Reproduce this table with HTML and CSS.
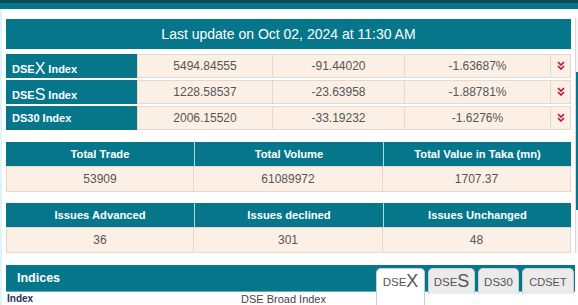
FILE: index.html
```html
<!DOCTYPE html>
<html>
<head>
<meta charset="utf-8">
<link rel="stylesheet" href="styles.css">
</head>
<body>
<div class="topbar"></div>
<div class="page">
  <div class="scrollarea">
    <div class="content">
      <div class="update">Last update on Oct 02, 2024 at 11:30 AM</div>
      <div class="idx">
        <div class="idx-row">
          <div class="idx-label big">DSE<span class="big-letter">X</span>&nbsp;Index</div>
          <div class="cell first">5494.84555</div>
          <div class="cell">-91.44020</div>
          <div class="cell">-1.63687%</div>
          <div class="cell arrow"><svg width="8" height="9" viewBox="0 0 8 9"><path d="M1 1 L4 4 L7 1 M1 5 L4 8 L7 5" fill="none" stroke="#c8102e" stroke-width="1.6"/></svg></div>
        </div>
        <div class="idx-row">
          <div class="idx-label big">DSE<span class="big-letter">S</span>&nbsp;Index</div>
          <div class="cell first">1228.58537</div>
          <div class="cell">-23.63958</div>
          <div class="cell">-1.88781%</div>
          <div class="cell arrow"><svg width="8" height="9" viewBox="0 0 8 9"><path d="M1 1 L4 4 L7 1 M1 5 L4 8 L7 5" fill="none" stroke="#c8102e" stroke-width="1.6"/></svg></div>
        </div>
        <div class="idx-row">
          <div class="idx-label">DS30 Index</div>
          <div class="cell first">2006.15520</div>
          <div class="cell">-33.19232</div>
          <div class="cell">-1.6276%</div>
          <div class="cell arrow"><svg width="8" height="9" viewBox="0 0 8 9"><path d="M1 1 L4 4 L7 1 M1 5 L4 8 L7 5" fill="none" stroke="#c8102e" stroke-width="1.6"/></svg></div>
        </div>
      </div>
      <div class="sum">
        <div class="sh">Total Trade</div>
        <div class="sh sep">Total Volume</div>
        <div class="sh sep">Total Value in Taka (mn)</div>
        <div class="sd">53909</div>
        <div class="sd nl">61089972</div>
        <div class="sd nl">1707.37</div>
      </div>
      <div class="sum sum2">
        <div class="sh">Issues Advanced</div>
        <div class="sh sep">Issues declined</div>
        <div class="sh sep">Issues Unchanged</div>
        <div class="sd">36</div>
        <div class="sd nl">301</div>
        <div class="sd nl">48</div>
      </div>
    </div>
    <div class="scrollbar"><div class="thumb"></div></div>
  </div>
  <div class="indices">
    <div class="ind-head">
      <span class="ind-title">Indices</span>
      <div class="tabs">
        <div class="tab active w1">DSE<span class="tab-big">X</span></div>
        <div class="tab w2">DSE<span class="tab-big">S</span></div>
        <div class="tab w3">DS30</div>
        <div class="tab w4">CDSET</div>
      </div>
    </div>
    <div class="ind-row">
      <span class="ind-key">Index</span>
      <span class="ind-val">DSE Broad Index</span>
    </div>
  </div>
</div>
</body>
</html>
```

FILE: styles.css
```css
html, body {
  margin: 0;
  padding: 0;
  background: #fff;
  overflow: hidden;
}
body {
  font-family: "Liberation Sans", Arial, sans-serif;
}
.topbar {
  height: 6px;
  border-top: 3px solid #0c4a58;
  background: #06778b;
}
.page {
  border-left: 2px solid #dcf5f9;
  padding: 9px 0 20px 4px;
}
.scrollarea {
  display: flex;
  gap: 4px;
  height: 235px;
}
.content {
  width: 565px;
  padding-top: 1px;
}
.scrollbar {
  box-sizing: border-box;
  width: 3px;
  border-left: 1px solid #d8d8d8;
  background: #f6f6f6;
}
.thumb {
  margin-top: 54px;
  height: 138px;
  background: #0d7386;
}
.update {
  height: 30px;
  background: #06778b;
  color: #fff;
  font-size: 14px;
  display: flex;
  align-items: center;
  justify-content: center;
}
.idx {
  margin-top: 5px;
  display: flex;
  flex-direction: column;
  gap: 2px;
}
.idx-row {
  display: grid;
  grid-template-columns: 131px 136px 132px 146px 20px;
  height: 24px;
}
.idx-label {
  background: #06778b;
  color: #fff;
  font-weight: bold;
  font-size: 11px;
  padding-left: 6px;
  display: flex;
  align-items: center;
  white-space: nowrap;
}
.idx-label.big {
  align-items: flex-end;
  padding-bottom: 1px;
  line-height: 16px;
}
.big-letter {
  font-size: 16px;
  font-weight: normal;
}
.cell {
  box-sizing: border-box;
  background: #fcf0e6;
  border: 1px solid #e6d9cc;
  border-left: none;
  display: flex;
  align-items: center;
  justify-content: center;
  font-size: 12px;
  color: #555;
}
.cell.first {
  border-left: 1px solid #e6d9cc;
}
.cell.arrow {
  padding-bottom: 1px;
}
.sum {
  margin-top: 12px;
  display: grid;
  grid-template-columns: 188px 189px 188px;
  grid-template-rows: 24px 26px;
}
.sum2 {
  margin-top: 11px;
}
.sh {
  background: #06778b;
  color: #fff;
  font-weight: bold;
  font-size: 11.2px;
  display: flex;
  align-items: center;
  justify-content: center;
}
.sh.sep {
  border-left: 1px solid #b5d8df;
}
.sd {
  box-sizing: border-box;
  background: #fcf0e6;
  border: 1px solid #e6d9cc;
  display: flex;
  align-items: center;
  justify-content: center;
  font-size: 12px;
  color: #555;
}
.sd.nl {
  border-left: none;
}
.indices {
  margin-top: 12px;
  width: 569px;
}
.ind-head {
  height: 26px;
  background: #06778b;
  border-bottom: 1px solid #63adba;
  display: flex;
  justify-content: space-between;
  align-items: flex-start;
}
.ind-title {
  color: #fff;
  font-weight: bold;
  font-size: 12.5px;
  line-height: 26px;
  padding-left: 11px;
}
.tabs {
  display: flex;
  gap: 3px;
  margin-top: 3px;
  margin-right: 1px;
}
.tab {
  box-sizing: border-box;
  height: 26px;
  background: #ebebeb;
  border: 1px solid #cdcdcd;
  border-bottom: none;
  border-radius: 5px 5px 0 0;
  display: flex;
  align-items: flex-end;
  justify-content: center;
  padding-bottom: 5px;
  color: #555;
  font-size: 11.5px;
  line-height: 14px;
}
.tab.active {
  background: #fff;
  height: 40px;
  padding-bottom: 19px;
}
.tab-big {
  font-size: 18px;
  line-height: 16px;
}
.w1 { width: 49px; }
.w2 { width: 47px; }
.w3 { width: 41px; }
.w4 { width: 52px; font-size: 11px; }
.ind-row {
  display: grid;
  grid-template-columns: 235px 1fr;
  height: 14px;
  line-height: 14px;
}
.ind-key {
  font-weight: bold;
  font-size: 10px;
  color: #1f2f5e;
  padding-left: 1px;
}
.ind-val {
  font-size: 11px;
  color: #444;
}
```
